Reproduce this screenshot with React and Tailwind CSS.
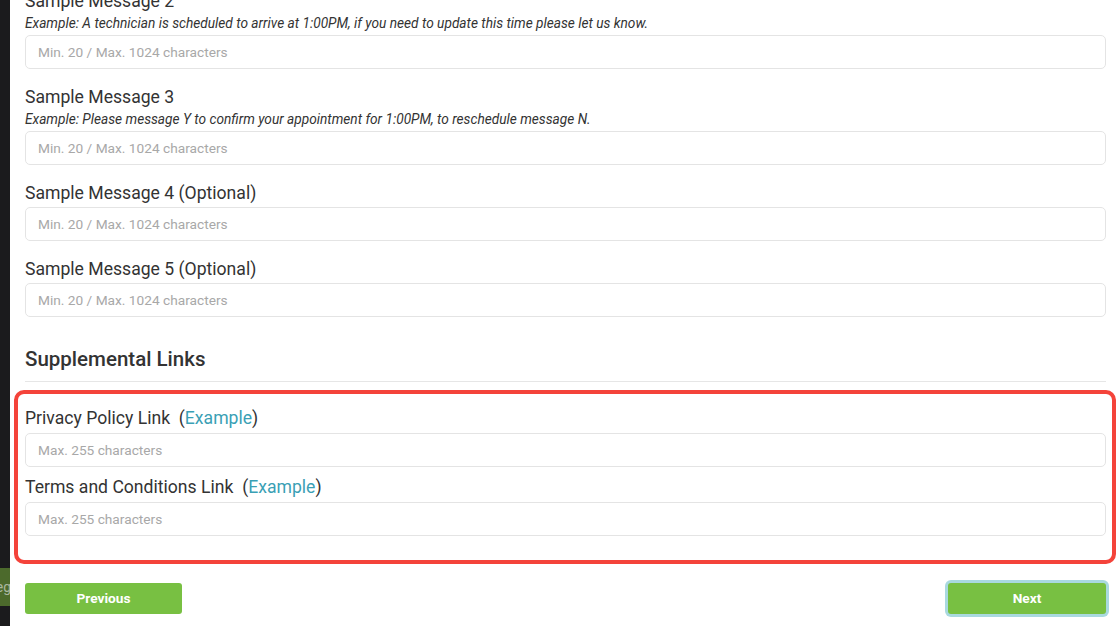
import React from 'react';

const Field = ({ label, example, placeholder }) => (
    <div className="mb-[17px]">
        <div className="text-[17.6px] leading-[23px] text-[#333]">{label}</div>
        {example && (
            <div className="text-[13.7px] leading-[20px] italic text-[#333]">{example}</div>
        )}
        <input
            className="mt-[2px] w-full h-[34px] border border-[#e4e4e4] rounded-[5px] px-3 text-[13.7px] text-[#333] placeholder:text-[#a8a8a8] outline-none"
            placeholder={placeholder}
        />
    </div>
);

const LinkField = ({ label, last }) => (
    <div className={last ? '' : 'mb-[9px]'}>
        <div className="text-[17.6px] leading-[23px] text-[#333]">
            {label}&nbsp; (<span className="text-[#3a9fb5]">Example</span>)
        </div>
        <input
            className="mt-[3px] w-full h-[34px] border border-[#e4e4e4] rounded-[5px] px-3 text-[13.7px] text-[#333] placeholder:text-[#a8a8a8] outline-none"
            placeholder="Max. 255 characters"
        />
    </div>
);

const App = () => {
    const msgPlaceholder = 'Min. 20 / Max. 1024 characters';

    return (
        <div className="h-[626px] w-[1120px] overflow-hidden flex bg-white font-['Roboto',sans-serif]">
            <div className="w-[10px] shrink-0 bg-[#1b1b1d] flex flex-col">
                <div className="h-[568px]" />
                <div className="h-[38px] bg-[#4c6a2c] flex items-center justify-end overflow-hidden">
                    <span className="text-[14px] text-[#a9b7a0] -mr-[1px]">eg</span>
                </div>
            </div>

            <div className="flex-1 pl-[15px] pr-[14px] -mt-[10px]">
                <Field
                    label="Sample Message 2"
                    example="Example: A technician is scheduled to arrive at 1:00PM, if you need to update this time please let us know."
                    placeholder={msgPlaceholder}
                />
                <Field
                    label="Sample Message 3"
                    example="Example: Please message Y to confirm your appointment for 1:00PM, to reschedule message N."
                    placeholder={msgPlaceholder}
                />
                <Field label="Sample Message 4 (Optional)" placeholder={msgPlaceholder} />
                <Field label="Sample Message 5 (Optional)" placeholder={msgPlaceholder} />

                <div className="mt-[29px] text-[20.5px] leading-[26px] font-medium text-[#333]">
                    Supplemental Links
                </div>
                <div className="mt-[9px] border-t border-[#e6e6e6]" />

                <div className="mt-[8px] -ml-[11px] -mr-[10px] border-[4px] border-[#f4433a] rounded-[10px] pl-[7px] pr-[6px] pt-[13px] pb-[24px]">
                    <LinkField label="Privacy Policy Link" />
                    <LinkField label="Terms and Conditions Link" last />
                </div>

                <div className="mt-[19px] flex justify-between">
                    <button className="w-[157px] h-[31px] bg-[#78c042] rounded-[3px] text-white text-[13.7px] font-bold">
                        Previous
                    </button>
                    <button className="w-[158px] h-[31px] bg-[#78c042] rounded-[3px] text-white text-[13.7px] font-bold ring-[3px] ring-[#a9d9df]">
                        Next
                    </button>
                </div>
            </div>
        </div>
    );
};

export default App;
